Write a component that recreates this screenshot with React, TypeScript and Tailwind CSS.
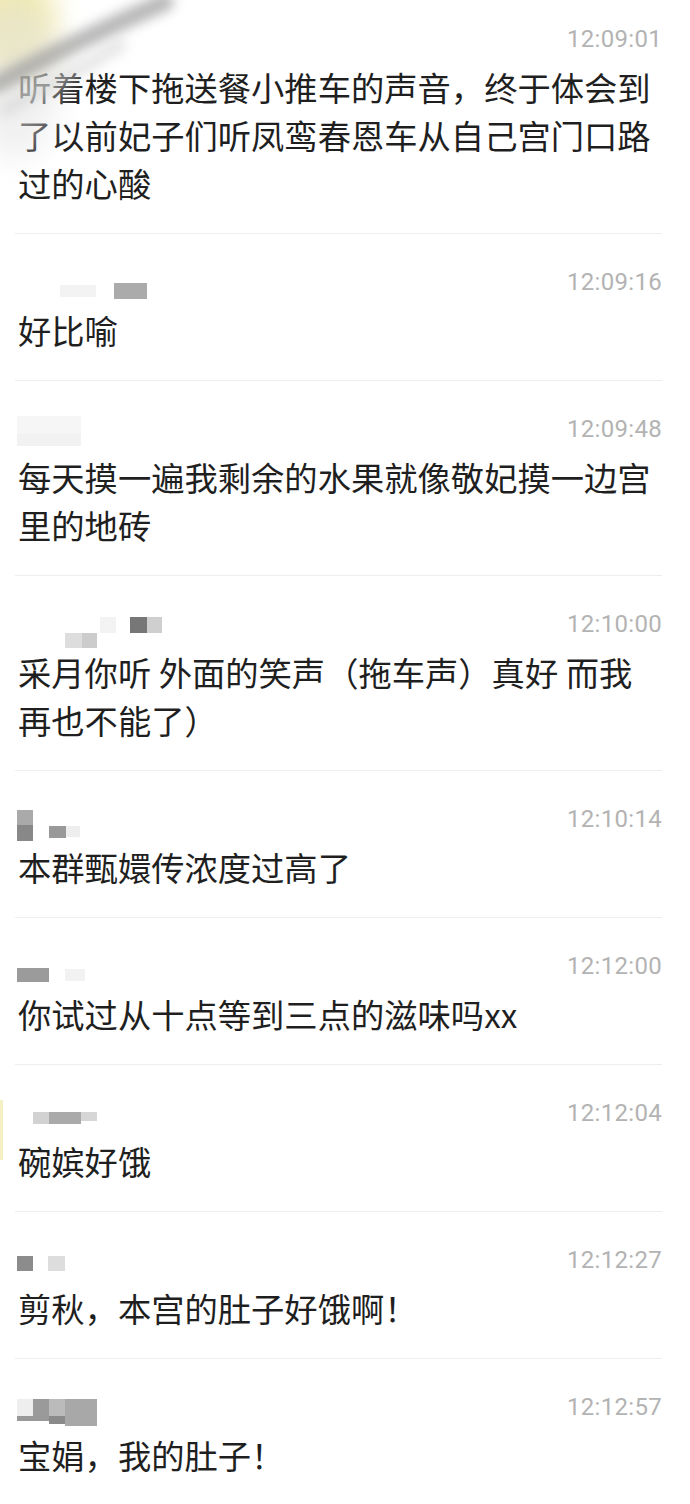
import React from "react";

type Px = [number, number, number, number, string];

type Msg = {
  time: string;
  lines: string[];
  name: Px[];
};

// mosaic blocks for blurred names: [x, y, w, h, color], y relative to header top
const messages: Msg[] = [
  {
    time: "12:09:01",
    lines: ["听着楼下拖送餐小推车的声音，终于体会到", "了以前妃子们听凤鸾春恩车从自己宫门口路", "过的心酸"],
    name: [],
  },
  {
    time: "12:09:16",
    lines: ["好比喻"],
    name: [
      [60, 28, 36, 12, "#f3f3f3"],
      [114, 26, 33, 16, "#ababab"],
    ],
  },
  {
    time: "12:09:48",
    lines: ["每天摸一遍我剩余的水果就像敬妃摸一边宫", "里的地砖"],
    name: [
      [17, 12, 64, 20, "#f6f6f6"],
      [17, 30, 64, 12, "#f2f2f2"],
    ],
  },
  {
    time: "12:10:00",
    lines: ["采月你听 外面的笑声（拖车声）真好 而我", "再也不能了）"],
    name: [
      [100, 18, 16, 16, "#f3f3f3"],
      [130, 18, 17, 16, "#777777"],
      [147, 18, 15, 16, "#cfcfcf"],
      [65, 34, 17, 15, "#dddddd"],
      [82, 34, 15, 15, "#cccccc"],
    ],
  },
  {
    time: "12:10:14",
    lines: ["本群甄嬛传浓度过高了"],
    name: [
      [17, 16, 16, 15, "#aaaaaa"],
      [17, 31, 16, 16, "#888888"],
      [49, 32, 17, 12, "#999999"],
      [66, 32, 14, 11, "#eeeeee"],
    ],
  },
  {
    time: "12:12:00",
    lines: ["你试过从十点等到三点的滋味吗xx"],
    name: [
      [17, 27, 32, 14, "#9b9b9b"],
      [65, 28, 20, 12, "#f2f2f2"],
    ],
  },
  {
    time: "12:12:04",
    lines: ["碗嫔好饿"],
    name: [
      [33, 24, 16, 12, "#d2d2d2"],
      [49, 24, 32, 12, "#aaaaaa"],
      [81, 24, 16, 9, "#d6d6d6"],
    ],
  },
  {
    time: "12:12:27",
    lines: ["剪秋，本宫的肚子好饿啊！"],
    name: [
      [17, 21, 16, 15, "#8c8c8c"],
      [48, 21, 17, 15, "#dddddd"],
    ],
  },
  {
    time: "12:12:57",
    lines: ["宝娟，我的肚子！"],
    name: [
      [17, 17, 16, 17, "#eeeeee"],
      [33, 17, 16, 17, "#9a9a9a"],
      [49, 17, 16, 17, "#bbbbbb"],
      [65, 17, 32, 27, "#a8a8a8"],
      [17, 34, 32, 5, "#999999"],
      [49, 34, 16, 8, "#8a8a8a"],
    ],
  },
];

const NameMosaic = ({ blocks }: { blocks: Px[] }) => (
  <svg width="200" height="50" className="shrink-0" style={{ filter: "blur(0.6px)" }}>
    {blocks.map(([x, y, w, h, c], i) => (
      <rect key={i} x={x} y={y} width={w} height={h} fill={c} />
    ))}
  </svg>
);

// photo smudge in the top-left corner
const Smudge = () => (
  <svg width="260" height="220" className="pointer-events-none absolute left-0 top-0">
    <defs>
      <filter id="sm1" x="-50%" y="-50%" width="200%" height="200%">
        <feGaussianBlur stdDeviation="14" />
      </filter>
      <filter id="sm2" x="-50%" y="-50%" width="200%" height="200%">
        <feGaussianBlur stdDeviation="6" />
      </filter>
    </defs>
    <ellipse cx="10" cy="20" rx="45" ry="55" fill="#efe6a0" opacity="0.85" filter="url(#sm1)" />
    <ellipse cx="15" cy="80" rx="45" ry="80" fill="#e2e2e2" opacity="0.5" filter="url(#sm1)" />
    <path d="M-5 85 C 40 60, 100 30, 165 2" stroke="#9a9a9a" strokeWidth="18" strokeLinecap="round" fill="none" opacity="0.7" filter="url(#sm2)" />
    <path d="M5 110 C 40 90, 80 70, 120 45" stroke="#cfcfcf" strokeWidth="14" strokeLinecap="round" fill="none" opacity="0.5" filter="url(#sm2)" />
  </svg>
);

const MessageRow = ({ msg, first }: { msg: Msg; first: boolean }) => (
  <div className={`mr-[28px] ml-[15px] border-[#eeeeee] ${first ? "pt-[15px]" : "pt-[24px]"} pb-[24px] border-b`}>
    <div className="flex h-[48px] items-center justify-between -ml-[15px]">
      <NameMosaic blocks={msg.name} />
      <span className="text-[24px] text-[#b3b3b3] font-['Roboto',sans-serif] tracking-[0.3px]">
        {msg.time}
      </span>
    </div>
    <div className="pl-[3px] pb-[2px] text-[33.3px] leading-[48px] text-[#1f1f1f] font-['Noto_Sans_CJK_SC',sans-serif] whitespace-nowrap">
      {msg.lines.map((l, i) => (
        <div key={i}>{l}</div>
      ))}
    </div>
  </div>
);

export default function App() {
  return (
    <div className="relative w-[690px] h-[1504px] overflow-hidden bg-white">
      {messages.map((m, i) => (
        <MessageRow key={i} msg={m} first={i === 0} />
      ))}
      <Smudge />
      <div className="pointer-events-none absolute left-0 top-[1100px] w-[3px] h-[60px] bg-[#f2ebb5] opacity-80" />
    </div>
  );
}
